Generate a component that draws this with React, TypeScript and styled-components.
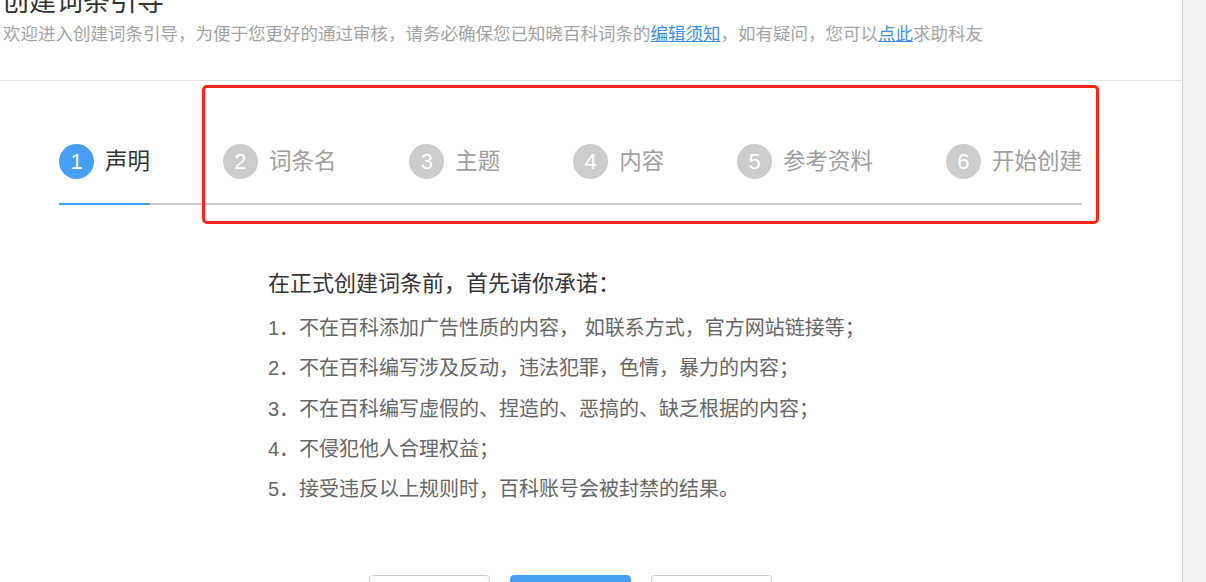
import React from "react";
import styled, { createGlobalStyle } from "styled-components";

const GlobalStyle = createGlobalStyle`
  html, body {
    margin: 0;
    padding: 0;
    background: #ffffff;
    font-family: "Liberation Sans", "Noto Sans CJK SC", sans-serif;
  }
  * { box-sizing: border-box; }
`;

const Page = styled.div`
  display: flex;
  width: 1206px;
  height: 582px;
  overflow: hidden;
`;

const Main = styled.main`
  position: relative;
  flex: 1;
  min-width: 0;
  background: #ffffff;
`;

const ScrollTrack = styled.div`
  width: 24px;
  flex: none;
  background: #f2f2f2;
  border-left: 1px solid #cfcfcf;
`;

const Header = styled.header`
  display: flow-root;
  height: 81px;
  padding-left: 2px;
  border-bottom: 1px solid #e6e6e6;
`;

const Title = styled.h1`
  margin: -11px 0 0;
  font-size: 27px;
  line-height: 27px;
  font-weight: normal;
  color: #333333;
`;

const Subtitle = styled.p`
  margin: 6px 0 0 1px;
  font-size: 17.5px;
  line-height: 24px;
  color: #a3a3a3;
`;

const Link = styled.a`
  color: #3d8fe3;
  text-decoration: underline;
`;

const Steps = styled.ol`
  display: flex;
  justify-content: space-between;
  list-style: none;
  margin: 0 100px 0 59px;
  padding: 63px 0 0;
  border-bottom: 2px solid #cccccc;
`;

const Step = styled.li<{ $active?: boolean }>`
  display: flex;
  align-items: center;
  gap: 11px;
  padding-bottom: 24px;
  margin-bottom: -2px;
  border-bottom: 2px solid ${(p) => (p.$active ? "#459ff5" : "transparent")};
`;

const StepNum = styled.span<{ $active?: boolean }>`
  display: flex;
  align-items: center;
  justify-content: center;
  width: 35px;
  height: 35px;
  border-radius: 50%;
  background: ${(p) => (p.$active ? "#459ff5" : "#cccccc")};
  color: #ffffff;
  font-size: 22px;
  line-height: 1;
`;

const StepLabel = styled.span<{ $active?: boolean }>`
  font-size: 22.5px;
  line-height: 30px;
  color: ${(p) => (p.$active ? "#333333" : "#9e9e9e")};
`;

const Pledge = styled.section`
  margin: 64px 0 0 268px;
`;

const PledgeTitle = styled.h2`
  margin: 0;
  font-size: 22px;
  line-height: 30px;
  font-weight: normal;
  color: #333333;
`;

const PledgeList = styled.ol`
  list-style: none;
  margin: 9px 0 0;
  padding: 0;
`;

const PledgeItem = styled.li`
  font-size: 20px;
  line-height: 40.25px;
  color: #666666;
  white-space: nowrap;
`;

const Actions = styled.div`
  display: flex;
  gap: 20px;
  margin: 66px 0 0 369px;
`;

const Button = styled.button<{ $primary?: boolean }>`
  width: 121px;
  height: 40px;
  border-radius: 4px;
  border: 1px solid ${(p) => (p.$primary ? "#459ff5" : "#cccccc")};
  background: ${(p) => (p.$primary ? "#459ff5" : "#ffffff")};
  color: ${(p) => (p.$primary ? "#ffffff" : "#666666")};
  font-family: inherit;
  font-size: 17.5px;
`;

const Annotation = styled.div`
  position: absolute;
  left: 202px;
  top: 85px;
  width: 897px;
  height: 139px;
  border: 3px solid #ff2418;
  border-radius: 5px;
  pointer-events: none;
`;

const steps = ["声明", "词条名", "主题", "内容", "参考资料", "开始创建"];

const rules = [
  "1．不在百科添加广告性质的内容， 如联系方式，官方网站链接等；",
  "2．不在百科编写涉及反动，违法犯罪，色情，暴力的内容；",
  "3．不在百科编写虚假的、捏造的、恶搞的、缺乏根据的内容；",
  "4．不侵犯他人合理权益；",
  "5．接受违反以上规则时，百科账号会被封禁的结果。",
];

export default function App() {
  return (
    <>
      <GlobalStyle />
      <Page>
        <Main>
          <Header>
            <Title>创建词条引导</Title>
            <Subtitle>
              欢迎进入创建词条引导，为便于您更好的通过审核，请务必确保您已知晓百科词条的
              <Link href="#">编辑须知</Link>，如有疑问，您可以<Link href="#">点此</Link>求助科友
            </Subtitle>
          </Header>
          <Steps>
            {steps.map((s, i) => (
              <Step key={s} $active={i === 0}>
                <StepNum $active={i === 0}>{i + 1}</StepNum>
                <StepLabel $active={i === 0}>{s}</StepLabel>
              </Step>
            ))}
          </Steps>
          <Pledge>
            <PledgeTitle>在正式创建词条前，首先请你承诺：</PledgeTitle>
            <PledgeList>
              {rules.map((r) => (
                <PledgeItem key={r}>{r}</PledgeItem>
              ))}
            </PledgeList>
          </Pledge>
          <Actions>
            <Button>上一步</Button>
            <Button $primary>同意</Button>
            <Button>取消</Button>
          </Actions>
          <Annotation />
        </Main>
        <ScrollTrack />
      </Page>
    </>
  );
}
